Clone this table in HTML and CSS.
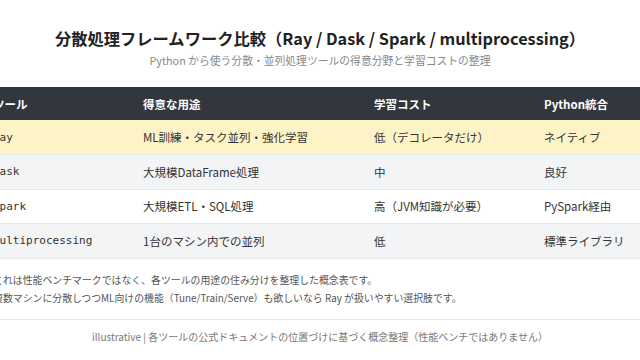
FILE: index.html
```html
<!DOCTYPE html>
<html lang="ja">
<head>
<meta charset="utf-8">
<title>分散処理フレームワーク比較</title>
<link rel="stylesheet" href="styles.css">
</head>
<body>
<main class="page">
  <h1 class="title">分散処理フレームワーク比較（Ray / Dask / Spark / multiprocessing）</h1>
  <p class="subtitle">Python から使う分散・並列処理ツールの得意分野と学習コストの整理</p>
  <section class="sheet">
    <table class="compare">
      <colgroup>
        <col class="c-tool"><col class="c-use"><col class="c-cost"><col class="c-py">
      </colgroup>
      <thead>
        <tr><th>ツール</th><th>得意な用途</th><th>学習コスト</th><th>Python統合</th></tr>
      </thead>
      <tbody>
        <tr class="hl"><td class="tool">Ray</td><td>ML訓練・タスク並列・強化学習</td><td>低（デコレータだけ）</td><td>ネイティブ</td></tr>
        <tr class="alt"><td class="tool">Dask</td><td>大規模DataFrame処理</td><td>中</td><td>良好</td></tr>
        <tr><td class="tool">Spark</td><td>大規模ETL・SQL処理</td><td>高（JVM知識が必要）</td><td>PySpark経由</td></tr>
        <tr class="alt"><td class="tool">multiprocessing</td><td>1台のマシン内での並列</td><td>低</td><td>標準ライブラリ</td></tr>
      </tbody>
    </table>
    <div class="notes">
      <p>これは性能ベンチマークではなく、各ツールの用途の住み分けを整理した概念表です。</p>
      <p>複数マシンに分散しつつML向けの機能（Tune/Train/Serve）も欲しいなら Ray が扱いやすい選択肢です。</p>
    </div>
    <footer class="foot">illustrative | 各ツールの公式ドキュメントの位置づけに基づく概念整理（性能ベンチではありません）</footer>
  </section>
</main>
</body>
</html>
```
FILE: styles.css
```css
html, body {
  margin: 0;
  padding: 0;
  background: #ffffff;
}
body {
  font-family: "Noto Sans CJK JP", "Noto Sans", sans-serif;
  color: #333;
  overflow: hidden;
}
.page {
  width: 640px;
  display: flex;
  flex-direction: column;
  align-items: center;
  padding-top: 26px;
}
.title {
  margin: 0;
  font-size: 16.3px;
  line-height: 24px;
  font-weight: 700;
  color: #222;
  white-space: nowrap;
}
.subtitle {
  margin: 2px 0 0;
  font-size: 10.8px;
  line-height: 16px;
  color: #888;
  white-space: nowrap;
}
.sheet {
  width: 680px;
  flex: none;
  margin-top: 19px;
}
.compare {
  width: 680px;
  table-layout: fixed;
  border-collapse: collapse;
  font-size: 11.5px;
}
.c-tool { width: 150px; }
.c-use { width: 231px; }
.c-cost { width: 170px; }
.c-py { width: 129px; }
.compare th {
  background: #32363d;
  color: #fff;
  font-weight: 700;
  text-align: left;
  height: 33px;
  padding: 0 13px;
  white-space: nowrap;
}
.compare td {
  height: 34.5px;
  padding: 0 13px;
  border-bottom: 1px solid #e5e7eb;
  white-space: nowrap;
  box-sizing: border-box;
}
.compare tr.hl td { background: #fef3c7; }
.compare tr.alt td { background: #f3f4f6; }
.compare td.tool {
  font-family: "DejaVu Sans Mono", monospace;
  font-size: 11px;
}
.notes {
  padding: 12px 13px 12px;
  font-size: 9.9px;
  line-height: 18px;
  color: #555;
}
.notes p {
  margin: 0;
  white-space: nowrap;
}
.foot {
  border-top: 1px solid #e5e7eb;
  padding-top: 9px;
  font-size: 10px;
  line-height: 16px;
  color: #777;
  text-align: center;
  white-space: nowrap;
}
```
